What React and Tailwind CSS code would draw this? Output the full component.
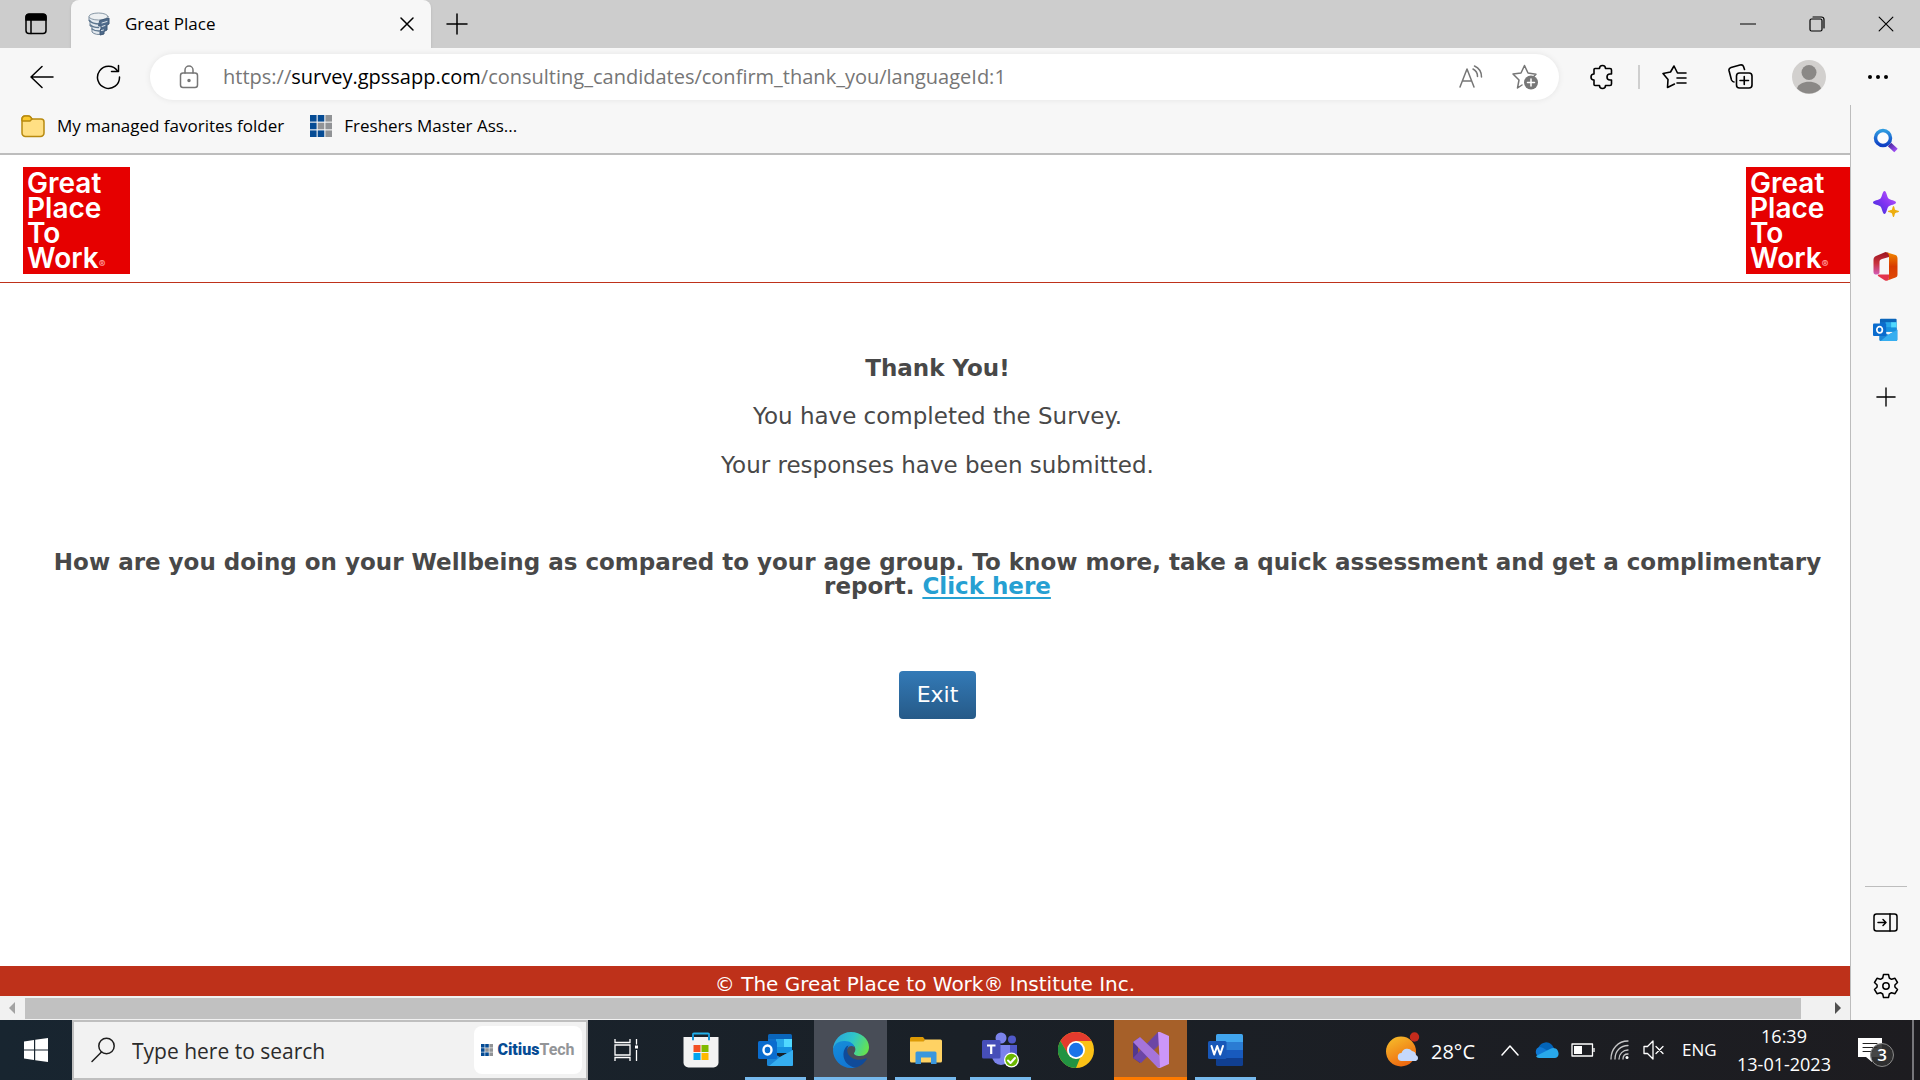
import React from 'react';

const ui = 'font-["Open_Sans","Noto_Sans",sans-serif]';

function Svg({ w = 24, h, box, children, sw = 1.5, className = '' }) {
  return (
    <svg
      width={w}
      height={h || w}
      viewBox={box || `0 0 ${w} ${h || w}`}
      fill="none"
      stroke="currentColor"
      strokeWidth={sw}
      strokeLinecap="round"
      strokeLinejoin="round"
      className={`block shrink-0 ${className}`}
      aria-hidden="true"
    >
      {children}
    </svg>
  );
}

const TabActionsIcon = () => (
  <Svg w={22}>
    <rect x="1" y="1.5" width="20" height="19" rx="3" />
    <path d="M1 7V4a3 3 0 0 1 3-3h14a3 3 0 0 1 3 3v3z" fill="currentColor" />
    <path d="M6 7v13.500" />
  </Svg>
);

const DatabaseIcon = () => (
  <Svg w={24} sw={1}>
    <path d="M2 5v4l1 1v4l2 1v5c2 2.500 7 3 10 2v-4l2-1V5z" fill="#e4eaf0" stroke="#74879a" />
    <ellipse cx="11.500" cy="4.500" rx="9.500" ry="3.500" fill="#edf0f2" stroke="#8797a5" />
    <path d="M2.500 8.500c2 2.500 6 3.500 10 3.500M3.500 13c2 2 5 2.500 8 2.500M5 17c2 1.500 4 2 7 2" stroke="#5f7890" strokeWidth="1.500" />
    <path d="M13 8.500L22 6v6l-2 1v5l-3 1.500V22l-4 1V18l1-1v-3h-2z" fill="#4f6a8a" stroke="#3f5977" />
    <path d="M15 11l5-1.500M15 14.500l3-1M14.500 18.500l2-.5" stroke="#dce4ea" />
  </Svg>
);

const CloseIcon = ({ w = 14, sw = 1.5 }) => (
  <Svg w={w} box="0 0 14 14" sw={sw}><path d="M1 1l12 12M13 1L1 13" /></Svg>
);
const PlusIcon = ({ w = 22 }) => (
  <Svg w={w} box="0 0 22 22" sw={1.5}><path d="M11 1v20M1 11h20" /></Svg>
);
const BackIcon = () => (
  <Svg w={24}><path d="M23 12H1M12 1.500L1 12l11 10.500" /></Svg>
);
const RefreshIcon = () => (
  <Svg w={26}><path d="M23.500 7.500h-7M23.500 7.500V1.500" /><path d="M22.500 7A11 11 0 1 0 24.500 13" /></Svg>
);
const LockIcon = () => (
  <Svg w={20} h={24}>
    <rect x="1.500" y="8" width="17" height="14.500" rx="2.500" />
    <path d="M6 8V5a4 4 0 0 1 8 0v3" />
    <circle cx="10" cy="15.500" r="1" fill="currentColor" />
  </Svg>
);
const ReadAloudIcon = () => (
  <Svg w={24}>
    <path d="M1 22L8 4l7 18M3.500 16h9M14 4c3 1.500 4.500 4.500 4.500 7.500M15.500 1c4.500 2 7 6.500 7 11" />
  </Svg>
);
const StarAddIcon = () => (
  <Svg w={27} h={26}>
    <path d="M10 21l-4.500 3 1.500-8-6-6 8-1L12.500 1.500 16 9l8 1.200-2 2" />
    <circle cx="19" cy="18.500" r="7" fill="currentColor" stroke="none" />
    <path d="M19 15v7M15.500 18.500h7" stroke="white" />
  </Svg>
);
const PuzzleIcon = () => (
  <Svg w={24} h={26} sw={1.6}>
    <path d="M4 5.500a1 1 0 0 1 1-1h4.500C9.500 2.500 10.500 1.500 12.500 1.500s3 1 3 3H20a1.500 1.500 0 0 1 1.500 1.500v4h-1.500a3 3 0 0 0 0 6h1.500v4a1.500 1.500 0 0 1-1.500 1.500h-4.500c0 2-1 3-3 3s-3-1-3-3H5a1 1 0 0 1-1-1V16c-2 0-3-1-3-3s1-3 3-3z" />
  </Svg>
);
const FavoritesIcon = () => (
  <Svg w={25} h={24} sw={1.6}>
    <path d="M12.500 19L5.500 22.500l.5-8-5-6 7.500-1.500L12 1l3.500 7H24M15 13h9M15 18h9" />
  </Svg>
);
const CollectionsIcon = () => (
  <Svg w={25} h={25} sw={1.6}>
    <rect x="8.500" y="9" width="15.500" height="15" rx="3" />
    <path d="M16.250 12.500v8M12 16.500h8.500M6 18c-1.500 0-2-1-2.500-2L1 6.500C.7 5 1.500 4 3 3.500L12 1c2-.5 3 0 3.500 1.500l1 3" />
  </Svg>
);
const ProfileIcon = () => (
  <Svg w={34} sw={0}>
    <circle cx="17" cy="17" r="17" fill="#d2d0ce" />
    <circle cx="17" cy="12.500" r="7.500" fill="#8a8886" />
    <path d="M5 28.500c2-9 22-9 24 0a17 17 0 0 1-24 0z" fill="#8a8886" />
  </Svg>
);
const DotsIcon = () => (
  <Svg w={20} h={6} sw={0}>
    {[2, 10, 18].map((x) => <circle key={x} cx={x} cy="3" r="2" fill="currentColor" />)}
  </Svg>
);
const FolderIcon = () => (
  <Svg w={24} h={23}>
    <path d="M1 4v14a3.500 3.500 0 0 0 3.500 3.500h15A3.500 3.500 0 0 0 23 18V7a3 3 0 0 0-3-3H11L9 1.500C8.500 1 8 1 7 1H4a3 3 0 0 0-3 3z" fill="#ffdf83" stroke="#b88a10" />
    <path d="M1 5.500V4a3 3 0 0 1 3-3h3c1 0 1.500 0 2 .5L11 4 9 6H1.500z" fill="#fbc92d" stroke="#b88a10" />
  </Svg>
);

function GridLogo({ w = 22 }) {
  const cells = [0, 1, 2, 3, 4, 5, 6, 7, 8];
  const grey = [2, 4, 5, 8];
  return (
    <Svg w={w} box="0 0 22 22" sw={0}>
      {cells.map((i) => (
        <rect key={i} x={(i % 3) * 7.700} y={Math.floor(i / 3) * 7.700} width="6.600" height="6.600" fill={grey.includes(i) ? '#919396' : '#054b94'} />
      ))}
    </Svg>
  );
}

const MagnifierColor = () => (
  <Svg w={26}>
    <defs>
      <linearGradient id="ring" x1="0" y1="0" x2="0" y2="1"><stop stopColor="#2f9be0" /><stop offset="1" stopColor="#0f3fc4" /></linearGradient>
      <linearGradient id="grip" x1="0" y1="0" x2="1" y2="1"><stop stopColor="#4b2ba0" /><stop offset="1" stopColor="#a04df5" /></linearGradient>
    </defs>
    <path d="M16.500 16.500l6.500 6" stroke="url(#grip)" strokeWidth="5" strokeLinecap="butt" />
    <circle cx="10" cy="10" r="7.500" stroke="url(#ring)" strokeWidth="3.500" fill="#fdfdfd" />
  </Svg>
);
const SparkleIcon = () => (
  <Svg w={28} sw={0}>
    <defs><linearGradient id="spark" x1="1" y1="0" x2="0" y2="1"><stop stopColor="#c45cff" /><stop offset=".5" stopColor="#8233f2" /><stop offset="1" stopColor="#3434d8" /></linearGradient></defs>
    <path d="M12.500 1c2 0 2.500 6 4 7.500S24 10.500 24 12.500s-6 2.500-7.500 4-2 7.500-4 7.500-2.500-6-4-7.500-7.500-2-7.500-4 6-2.500 7.500-4 2-7.500 4-7.500z" fill="url(#spark)" />
    <path d="M21.500 16c1 0 1 3 1.700 3.800.8.700 3.800.7 3.800 1.700s-3 1-3.800 1.700c-.7.800-.7 3.800-1.700 3.800s-1-3-1.700-3.800c-.8-.7-3.800-.7-3.800-1.700s3-1 3.800-1.700c.7-.8.700-3.800 1.700-3.800z" fill="#edae10" />
  </Svg>
);
const OfficeIcon = () => (
  <Svg w={25} h={29} sw={0}>
    <defs>
      <linearGradient id="ofl" x1="0" y1="0" x2="0" y2="1"><stop stopColor="#9c1320" /><stop offset=".5" stopColor="#c8333c" /><stop offset="1" stopColor="#d45db8" /></linearGradient>
      <linearGradient id="ofr" x1="0" y1="0" x2="0" y2="1"><stop stopColor="#f18a00" /><stop offset=".5" stopColor="#d83b01" /><stop offset="1" stopColor="#e04a08" /></linearGradient>
    </defs>
    <path d="M12.500 0L3 4C1 5 .5 6 .5 8v12c0 3 3 3 5 2 1-.5 1-1 1-2V10c0-2 1-2.500 2.500-3l7-2V1z" fill="url(#ofl)" />
    <path d="M12.500 0l10 3C24 3.500 24.500 5 24.500 6.500v16c0 1.500-.5 2.500-2 3L13 29c2-1 3-2 3-4V4c0-2-1-3-3.500-4z" fill="url(#ofr)" />
    <path d="M5 24c-.5-1 0-1.500 1-1.500h10V25c0 3-2 4.500-4 3.500z" fill="#e4344c" />
  </Svg>
);
const OutlookIcon = ({ w = 36 }) => (
  <Svg w={w} h={(w * 34) / 36} box="0 0 36 34" sw={0}>
    <rect x="10" y="1" width="24" height="18" rx="1.500" fill="#0a65ba" />
    <path d="M10 6h8v8h-8z" fill="#0f6fc9" />
    <path d="M18 6h8v8h-8z" fill="#28a8ea" />
    <path d="M26 6h8v8h-8z" fill="#50d9ff" />
    <path d="M18 14h16v6H18z" fill="#1490df" />
    <path d="M9 17l13 7 13-7v14.500a1.500 1.500 0 0 1-1.500 1.500h-23A1.500 1.500 0 0 1 9 31.500z" fill="#1b86d6" />
    <path d="M35 17v14.500a1.500 1.500 0 0 1-1.500 1.500H11l11-9z" fill="#35aef0" />
    <rect x="0" y="8" width="19" height="18" rx="1.500" fill="#0a6cce" />
    <ellipse cx="9.500" cy="17" rx="4" ry="4.500" fill="none" stroke="#fff" strokeWidth="2.400" />
  </Svg>
);
const PanelIcon = () => (
  <Svg w={25} h={19}>
    <rect x="1" y="1" width="23" height="17" rx="2.500" />
    <path d="M17 1v17M5 9.500h8M10 6.500l3 3-3 3" />
  </Svg>
);
const GearIcon = () => (
  <Svg w={26}>
    <path d="M10.500 1.500h5l.8 3.500 2.200 1.300 3.500-1 2.500 4.200-2.600 2.500v2l2.600 2.500-2.500 4.200-3.500-1-2.200 1.300-.8 3.500h-5L9.700 21l-2.200-1.300-3.500 1-2.500-4.200L4.100 14v-2L1.500 9.500 4 5.300l3.500 1L9.700 5z" />
    <circle cx="13" cy="13" r="3.200" />
  </Svg>
);

const WindowsIcon = () => (
  <Svg w={24} sw={0}>
    <path d="M0 3.500L10 2v9.500H0zM11.200 1.800L24 0v11.500H11.200zM0 12.500h10V22L0 20.500zM11.200 12.500H24V24l-12.800-1.800z" fill="#fff" />
  </Svg>
);
const SearchIcon = () => (
  <Svg w={26}><circle cx="16.500" cy="9" r="7.700" /><path d="M11.500 15L2 24.500" /></Svg>
);
const TaskViewIcon = () => (
  <Svg w={24} sw={1.300}>
    <path d="M1 1v3.500h15V1M1 23v-3.500h15V23M1 7h15v10H1zM22.500 1v5.500M22.500 12v11" strokeLinecap="butt" strokeLinejoin="miter" />
    <rect x="21" y="7.500" width="3" height="3" fill="currentColor" stroke="none" />
  </Svg>
);
const StoreIcon = () => (
  <Svg w={36} sw={0}>
    <path d="M10 8V2.500a1 1 0 0 1 1-1h14a1 1 0 0 1 1 1V8" fill="none" stroke="#22b1ea" strokeWidth="2" />
    <path d="M.5 5h35v25.500a5 5 0 0 1-5 5h-25a5 5 0 0 1-5-5z" fill="#f2f2f2" />
    <path d="M10 7.500V3M26 7.500V3" stroke="#1592d2" strokeWidth="2" />
    <path d="M10.500 13h7v7h-7z" fill="#f25022" />
    <path d="M18.500 13h7v7h-7z" fill="#7fba00" />
    <path d="M10.500 21h7v7h-7z" fill="#00a4ef" />
    <path d="M18.500 21h7v7h-7z" fill="#ffb900" />
  </Svg>
);
const EdgeIcon = () => (
  <Svg w={36} sw={0}>
    <defs>
      <linearGradient id="edgeTop" x1="0" y1=".3" x2="1" y2=".6"><stop stopColor="#2aa6dd" /><stop offset=".5" stopColor="#2fc5c9" /><stop offset="1" stopColor="#66e34e" /></linearGradient>
      <linearGradient id="edgeLeft" x1="0" y1="0" x2=".4" y2="1"><stop stopColor="#168ed9" /><stop offset="1" stopColor="#1177d4" /></linearGradient>
    </defs>
    <path d="M0 18C0 8 8 0 18 0s18 7 18 15c0 6-4 9-9 9-4 0-6.500-1.500-6-3 2-2 2-6-1-8C15 9 3 8 0 18z" fill="url(#edgeTop)" />
    <path d="M0 18c1-7 7-9.500 12-9 5 0 9 3 9.500 6-5-3-8 1-8 6 0 8 6 14 12 13-3 1.500-5 2-7.500 2C8 36 0 28 0 18z" fill="url(#edgeLeft)" />
    <path d="M14 14c-6 5-5 19 8 21.500 5-.5 9-4 11.500-8 .5-1-.5-1.500-1-1-7 3-16 .5-18-6-.5-2-.5-4.500 1-7z" fill="#104b99" />
  </Svg>
);
const ExplorerIcon = () => (
  <Svg w={32} h={27} sw={0}>
    <path d="M0 1.500A1.500 1.500 0 0 1 1.500 0H13l2 2.500L13 6H0z" fill="#dd9a05" />
    <path d="M0 4.500h13.500L15 2.500h15.500A1.500 1.500 0 0 1 32 4v20a1.500 1.500 0 0 1-1.500 1.500h-29A1.500 1.500 0 0 1 0 24z" fill="#ffd263" />
    <path d="M5.500 27V16a1.500 1.500 0 0 1 1.500-1.500h18a1.500 1.500 0 0 1 1.500 1.500v11H21v-6.500H11V27z" fill="#3b97dd" />
  </Svg>
);
const TeamsIcon = () => (
  <Svg w={37} h={36} sw={0}>
    <circle cx="19" cy="6" r="5.500" fill="#7b83eb" />
    <circle cx="30" cy="7.500" r="4" fill="#5059c9" />
    <path d="M23 13h12v11c0 4-2 7-6 7h-6z" fill="#5059c9" />
    <path d="M10 13h18v11a9 9 0 0 1-18 0z" fill="#7b83eb" />
    <rect x="0" y="8" width="18.500" height="18.500" rx="1.500" fill="#464eb8" />
    <path d="M5 13.500h8.500M9.200 13.500V22" stroke="#fff" strokeWidth="2.200" strokeLinecap="butt" />
    <circle cx="29.500" cy="28" r="7.500" fill="#fff" />
    <circle cx="29.500" cy="28" r="6.200" fill="#6bb700" />
    <path d="M26 28.500l2.500 2.500 4.500-5" fill="none" stroke="#fff" strokeWidth="2" />
  </Svg>
);
const ChromeIcon = () => (
  <Svg w={36} sw={0}>
    <circle cx="18" cy="18" r="18" fill="#fbc116" />
    <path d="M18 9h15.600a18 18 0 0 0-31.200 0L10 22z" fill="#e33b2e" />
    <path d="M2.400 9l8 13.500L18 27l4-1-4 10A18 18 0 0 1 2.400 9z" fill="#229342" />
    <circle cx="18" cy="18" r="9" fill="#fff" />
    <circle cx="18" cy="18" r="7.200" fill="#1a73e8" />
  </Svg>
);
const VisualStudioIcon = () => (
  <Svg w={36} sw={0}>
    <path d="M0 10l7-5v6l-2 2v10l2 2v6l-7-5z" fill="#52388c" />
    <path d="M0 26L25 0l2 .5V12L8 31z" fill="#6c45a5" />
    <path d="M0 10l7-5 20 19v11.500l-2 .5z" fill="#a574dc" />
    <path d="M25 0h2l9 4v28l-9 4h-2l2-1z" fill="#cc96f8" />
  </Svg>
);
const WordIcon = () => (
  <Svg w={36} h={32} sw={0}>
    <path d="M8 8V1.500A1.500 1.500 0 0 1 9.500 0h24A1.500 1.500 0 0 1 35 1.500V8z" fill="#41a5ee" />
    <path d="M8 8h27v8H8z" fill="#2b7cd3" />
    <path d="M8 16h27v8H8z" fill="#185abd" />
    <path d="M8 24h27v6.500a1.500 1.500 0 0 1-1.500 1.500h-24A1.500 1.500 0 0 1 8 30.500z" fill="#103f91" />
    <rect x="0" y="7" width="18.500" height="18" rx="1.500" fill="#1857b8" />
    <path d="M3.500 12l2.700 8.500L9.200 12l3 8.500L15 12" fill="none" stroke="#fff" strokeWidth="2" />
  </Svg>
);
const WeatherIcon = () => (
  <Svg w={34} h={36} sw={0}>
    <defs><linearGradient id="sun" x1="0" y1="0" x2=".5" y2="1"><stop stopColor="#f7c22c" /><stop offset="1" stopColor="#ee6a10" /></linearGradient></defs>
    <circle cx="15" cy="19.500" r="15" fill="url(#sun)" />
    <circle cx="28.500" cy="5" r="4.700" fill="#c42b1c" />
    <path d="M16 29a4 4 0 0 1-.5-8 6 6 0 0 1 10.500-2 4.500 4.500 0 0 1 4 4 3.200 3.200 0 0 1 0 6z" fill="#c5d8fb" />
  </Svg>
);
const ChevronUpIcon = () => <Svg w={18} h={12} sw={1.500}><path d="M1 11l8-9 8 9" /></Svg>;
const OneDriveIcon = () => (
  <Svg w={25} h={16} sw={0}>
    <path d="M6 11A5 5 0 0 1 5 4.500 8 8 0 0 1 18 3l2 3-10 7z" fill="#0364b8" />
    <path d="M5 14.500A5 5 0 0 1 5.500 5c2 0 4 1 6 2.500l9 5z" fill="#0f78d4" />
    <path d="M2 14l14-7c6-3 9 2 8.500 5.500A4 4 0 0 1 20.500 16H5c-1.500 0-2.500-1-3-2z" fill="#28a8ea" />
  </Svg>
);
const BatteryIcon = () => (
  <Svg w={24} h={14} sw={1.300}>
    <rect x="1" y="1" width="20.500" height="12" />
    <path d="M3 3h8v8H3z" fill="currentColor" stroke="none" />
    <path d="M23 5v4" strokeLinecap="butt" />
  </Svg>
);
const WifiIcon = () => (
  <Svg w={19} h={20} sw={1.300}>
    <path d="M1 19C1 9 8 1 18 1M5 19C5 11 10.500 5.500 18 5.500M9 19c0-5 4-9 9-9M13 19c0-3 2-5 5-5" opacity=".75" />
    <circle cx="17" cy="17.500" r="1.500" fill="currentColor" stroke="none" />
  </Svg>
);
const MutedIcon = () => (
  <Svg w={22} h={20} sw={1.300}>
    <path d="M1 6.500h3.500L10 1v18l-5.500-5.500H1zM13 6.500l7 7M20 6.500l-7 7" />
  </Svg>
);

const Logo = () => (
  <div className='h-[107px] w-[107px] shrink-0 bg-[#e60000] pt-1 pl-1 font-["Inter",sans-serif] text-[28px] leading-[25px] font-semibold text-white'>
    Great<br />Place<br />To<br />Work<span className="text-[10px] text-red-300">®</span>
  </div>
);

const IconButton = ({ label, className = '', children }) => (
  <button type="button" aria-label={label} className={`flex shrink-0 items-center justify-center ${className}`}>{children}</button>
);

const TitleBar = () => (
  <header className="flex h-12 shrink-0 bg-[#cdcdcd]">
    <IconButton label="Tab actions" className="w-[71px]"><TabActionsIcon /></IconButton>
    <div className="flex w-[360px] items-center rounded-t-lg bg-[#f7f7f7] pl-4 pr-[17px] shadow-sm">
      <DatabaseIcon />
      <span className="ml-3.5 flex-1 text-[17px]">Great Place</span>
      <IconButton label="Close tab"><CloseIcon /></IconButton>
    </div>
    <IconButton label="New tab" className="w-[52px]"><PlusIcon /></IconButton>
    <div className="flex-1" />
    <IconButton label="Minimize" className="w-[69px]"><Svg w={16} h={2} sw={1}><path d="M0 1h16" /></Svg></IconButton>
    <IconButton label="Restore" className="w-[69px]">
      <Svg w={16} sw={1.200}><rect x="1" y="3" width="12" height="12" rx="1.500" /><path d="M4 1h8.500A2.500 2.500 0 0 1 15 3.500V12" /></Svg>
    </IconButton>
    <IconButton label="Close window" className="w-[69px]"><CloseIcon w={16} sw={1} /></IconButton>
  </header>
);

const Toolbar = () => (
  <div className="flex h-[57px] shrink-0 items-center bg-[#f7f7f7]">
    <IconButton label="Back" className="ml-2 w-[67px]"><BackIcon /></IconButton>
    <IconButton label="Refresh" className="w-[66px]"><RefreshIcon /></IconButton>
    <div className="ml-[9px] flex h-[46px] flex-1 items-center rounded-full bg-white pl-[29px] pr-5 text-[#767676] shadow-[0_0_6px_rgba(0,0,0,0.08)]">
      <LockIcon />
      <div className="ml-6 flex-1 text-[20px]" role="textbox" aria-label="Address">
        https://<span className="text-black">survey.gpssapp.com</span>/consulting_candidates/confirm_thank_you/languageId:1
      </div>
      <IconButton label="Read aloud" className="mr-[29px]"><ReadAloudIcon /></IconButton>
      <IconButton label="Add to favorites"><StarAddIcon /></IconButton>
    </div>
    <IconButton label="Extensions" className="ml-[31px]"><PuzzleIcon /></IconButton>
    <div className="ml-6 h-6 w-0.5 bg-[#cfcfcf]" />
    <IconButton label="Favorites" className="ml-[22px]"><FavoritesIcon /></IconButton>
    <IconButton label="Collections" className="ml-[41px]"><CollectionsIcon /></IconButton>
    <IconButton label="Profile" className="ml-[39px]"><ProfileIcon /></IconButton>
    <IconButton label="Settings and more" className="ml-[42px] mr-8"><DotsIcon /></IconButton>
  </div>
);

const FavoritesBar = () => (
  <nav className="flex h-[50px] shrink-0 items-center border-b-2 border-[#bdbdbd] bg-[#f7f7f7] pb-1.5 pl-[21px] text-[17px]">
    <a href="#folder" className="flex items-center gap-3"><FolderIcon />My managed favorites folder</a>
    <a href="#freshers" className="ml-[26px] flex items-center gap-3"><GridLogo />Freshers Master Ass...</a>
  </nav>
);

const Page = () => (
  <main className='flex min-h-0 flex-1 flex-col overflow-hidden bg-white font-["DejaVu_Sans",Verdana,sans-serif]'>
    <div className="flex shrink-0 justify-between overflow-hidden border-b border-[#be311a] pt-3 pb-2 pl-[23px]">
      <Logo />
      <div className="-mr-[3px]"><Logo /></div>
    </div>
    <section className="-mr-[25px] flex flex-1 flex-col items-center px-12 pt-[73px] text-center text-[23px] leading-6 text-[#484848]">
      <h1 className="font-bold">Thank You!</h1>
      <p className="mt-6">You have completed the Survey.</p>
      <p className="mt-[25px]">Your responses have been submitted.</p>
      <p className="mt-[73px] font-bold">
        How are you doing on your Wellbeing as compared to your age group. To know more, take a quick assessment and get a complimentary report. <a href="#assessment" className="text-[#26a0d2] underline decoration-2 underline-offset-3">Click here</a>
      </p>
      <button type="button" className="mt-[73px] h-12 rounded-sm bg-linear-to-b from-[#337ab7] to-[#265a88] px-4.5 text-[22px] text-white">Exit</button>
    </section>
    <footer className="h-[30px] shrink-0 bg-[#be311a] pt-1.5 text-center text-[20px] leading-6 text-white">© The Great Place to Work® Institute Inc.</footer>
    <div className="flex h-6 shrink-0 items-center bg-[#f1f1f1]">
      <Svg w={25} h={22} sw={0}><path d="M15 5v12l-6-6z" fill="#a3a3a3" /></Svg>
      <div className="h-[21px] flex-1 bg-[#c1c1c1]" />
      <Svg w={49} h={22} sw={0}><path d="M34 5v12l6-6z" fill="#505050" /></Svg>
    </div>
  </main>
);

const Sidebar = () => (
  <aside className="flex w-[70px] shrink-0 flex-col items-center border-l border-[#bdbdbd] bg-[#f7f7f7]">
    <IconButton label="Search" className="mt-1 h-[63px]"><MagnifierColor /></IconButton>
    <IconButton label="Discover" className="h-[63px]"><SparkleIcon /></IconButton>
    <IconButton label="Office" className="h-[63px]"><OfficeIcon /></IconButton>
    <IconButton label="Outlook" className="h-[63px]"><OutlookIcon w={25} /></IconButton>
    <IconButton label="Add" className="mt-1 h-[63px]"><PlusIcon w={20} /></IconButton>
    <div className="flex-1" />
    <div className="h-px w-[42px] bg-[#bdbdbd]" />
    <IconButton label="Hide sidebar" className="mt-1 h-[63px]"><PanelIcon /></IconButton>
    <IconButton label="Settings" className="mb-[3px] h-[63px]"><GearIcon /></IconButton>
  </aside>
);

const apps = [
  { name: 'Task View', icon: <TaskViewIcon /> },
  { name: 'Microsoft Store', icon: <StoreIcon /> },
  { name: 'Outlook', icon: <OutlookIcon />, bar: 'w-[61px] bg-[#76b9ed]' },
  { name: 'Edge', icon: <EdgeIcon />, cell: 'bg-[#484d57]', bar: 'w-full bg-[#76b9ed]' },
  { name: 'File Explorer', icon: <ExplorerIcon />, bar: 'w-[61px] bg-[#76b9ed]' },
  { name: 'Teams', icon: <TeamsIcon />, bar: 'w-[61px] bg-[#76b9ed]' },
  { name: 'Chrome', icon: <ChromeIcon /> },
  { name: 'Visual Studio', icon: <VisualStudioIcon />, cell: 'bg-[#a66029]', bar: 'w-full bg-[#ff7a00]' },
  { name: 'Word', icon: <WordIcon />, bar: 'w-[61px] bg-[#76b9ed]' },
];

const Taskbar = () => (
  <footer className="flex h-15 shrink-0 bg-linear-to-r from-[#182530] via-[#1a2027] to-[#1d1c20] text-white">
    <IconButton label="Start" className="w-[72px]"><WindowsIcon /></IconButton>
    <div className="flex w-[516px] items-center border-2 border-[#bfbfbf] bg-[#f2f2f2] pl-4 pr-1 text-[#1f1f1f]">
      <SearchIcon />
      <input aria-label="Type here to search" placeholder="Type here to search" className="ml-4 min-w-0 flex-1 bg-transparent pt-1 text-[21px] outline-none placeholder:text-[#2b2b2b]" />
      <div className='flex h-12 w-[108px] items-center justify-center gap-1 rounded-lg bg-white font-["Roboto",sans-serif] text-[16px] text-[#939598]'>
        <GridLogo w={12} />
        <span><b className="font-black text-[#054b94]">Citius</b><b>Tech</b></span>
      </div>
    </div>
    {apps.map((a) => (
      <div key={a.name} className="flex w-[75px] justify-center">
        <button type="button" aria-label={a.name} className={`flex w-[73px] flex-col items-center ${a.cell || ''}`}>
          <span className="flex flex-1 items-center pt-[3px]">{a.icon}</span>
          <span className={`h-[3px] ${a.bar || ''}`} />
        </button>
      </div>
    ))}
    <div className="flex-1" />
    <div className="flex items-center">
      <WeatherIcon />
      <span className="ml-[11px] pt-1 text-[20px]">28°C</span>
      <IconButton label="Show hidden icons" className="ml-[26px]"><ChevronUpIcon /></IconButton>
      <IconButton label="OneDrive" className="ml-[15px]"><OneDriveIcon /></IconButton>
      <IconButton label="Battery" className="ml-3"><BatteryIcon /></IconButton>
      <IconButton label="Network" className="ml-[15px]"><WifiIcon /></IconButton>
      <IconButton label="Volume" className="ml-[14px]"><MutedIcon /></IconButton>
      <span className="ml-[17px] w-9 text-[17px]">ENG</span>
      <time className="ml-[18px] w-[96px] text-center text-[18px] leading-7 whitespace-nowrap">16:39<br />13-01-2023</time>
      <button type="button" aria-label="3 notifications" className="relative ml-[26px] h-9 w-9">
        <Svg w={26} h={24} sw={0}><path d="M0 0h24v19H14v5l-6-5H0z" fill="#fff" /><path d="M5 5.500h14M5 9.500h14M5 13.500h9" stroke="#222" strokeWidth="1" /></Svg>
        <span className="absolute top-[11px] left-3 flex h-6 w-6 items-center justify-center rounded-full border border-[#8a8a8a] bg-[#323232]/90 text-[17px] font-semibold">3</span>
      </button>
    </div>
    <div className="ml-[18px] mr-1.5 w-0.5 bg-[#77777b]" />
  </footer>
);

export default function App() {
  return (
    <div className={`flex h-screen flex-col overflow-hidden bg-[#f7f7f7] text-black ${ui}`}>
      <TitleBar />
      <Toolbar />
      <div className="flex min-h-0 flex-1">
        <div className="flex min-w-0 flex-1 flex-col">
          <FavoritesBar />
          <Page />
        </div>
        <Sidebar />
      </div>
      <Taskbar />
    </div>
  );
}
